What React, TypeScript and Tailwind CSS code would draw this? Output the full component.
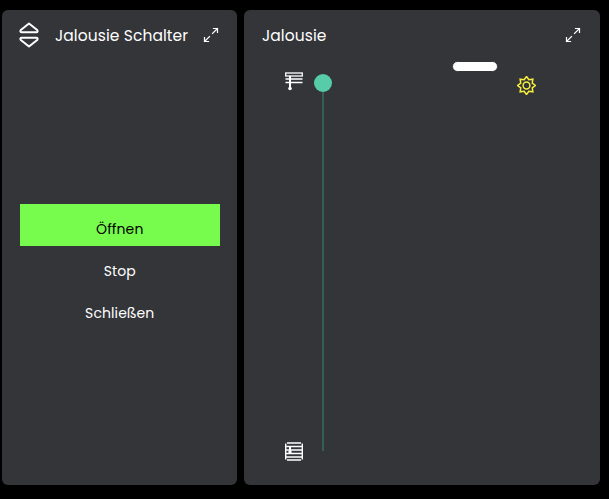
function Expand() {
  return (
    <svg width="16" height="16" viewBox="0 0 16 16" fill="none" stroke="#ffffff" strokeWidth="1.2" strokeLinecap="square">
      <path d="M9.5 6.5 L14.5 1.5 M10.5 1.5 H14.5 V5.5" />
      <path d="M6.5 9.5 L1.5 14.5 M1.5 10.5 V14.5 H5.5" />
    </svg>
  );
}

function UpDown() {
  return (
    <svg width="20" height="26" viewBox="0 0 20 26" fill="none" stroke="#ffffff" strokeWidth="2" strokeLinejoin="round">
      <path d="M10 1.5 L18.2 8 Q19.4 10.3 17.2 10.3 H2.8 Q0.6 10.3 1.8 8 Z" />
      <path d="M10 24.5 L18.2 18 Q19.4 15.7 17.2 15.7 H2.8 Q0.6 15.7 1.8 18 Z" />
    </svg>
  );
}

function BlindOpen() {
  return (
    <svg width="18" height="19" viewBox="0 0 18 19" fill="none" stroke="#ffffff">
      <rect x="0.7" y="1" width="16.6" height="3" strokeWidth="1.3" />
      <path d="M0.5 7 H17.5 M0.5 10.5 H17.5" strokeWidth="1.4" />
      <path d="M5 4 V15" strokeWidth="2" />
      <circle cx="5" cy="16.5" r="1.8" fill="#ffffff" stroke="none" />
    </svg>
  );
}

function BlindClosed() {
  return (
    <svg width="18" height="19" viewBox="0 0 18 19" fill="none" stroke="#ffffff" strokeWidth="1.3">
      <path d="M2 1 H16 M0.7 1.5 V17.5 M17.3 1.5 V17.5 M2 18 H16" strokeWidth="1.4" />
      <path d="M0.7 4.5 H17.3 M0.7 8 H17.3 M0.7 11.5 H17.3 M0.7 15 H17.3" />
      <path d="M5 4.5 V9" strokeWidth="2" />
      <circle cx="5" cy="10" r="1.7" fill="#ffffff" stroke="none" />
    </svg>
  );
}

function Sun() {
  const pts: string[] = [];
  for (let i = 0; i < 16; i++) {
    const r = i % 2 === 0 ? 9 : 6.2;
    const a = (i * Math.PI) / 8 - Math.PI / 2;
    pts.push(`${(9.5 + r * Math.cos(a)).toFixed(2)},${(9.5 + r * Math.sin(a)).toFixed(2)}`);
  }
  return (
    <svg width="19" height="19" viewBox="0 0 19 19" fill="none" stroke="#f8ee3c" strokeWidth="1.5">
      <polygon points={pts.join(" ")} strokeLinejoin="miter" />
      <circle cx="9.5" cy="9.5" r="3.4" />
    </svg>
  );
}

export default function App() {
  return (
    <div className="w-[609px] h-[499px] bg-black flex gap-[7px] pl-[2px] pt-[10px] pb-[14px] pr-[9px] font-['Poppins','Inter',sans-serif] text-white overflow-hidden">
      <div className="w-[235px] bg-[#333539] rounded-[6px] flex flex-col">
        <div className="h-[50px] flex items-center pl-[17px] pr-[18px]">
          <UpDown />
          <span className="ml-[16px] flex-1 pt-[2px] text-[15.5px] tracking-[0.08px] leading-none">Jalousie Schalter</span>
          <Expand />
        </div>
        <div className="mt-[144px] ml-[18px] mr-[17.5px] flex flex-col text-[14px] tracking-[0.1px]">
          <div className="h-[42px] bg-[#77fb4d] text-black flex items-center justify-center pt-[8px]">Öffnen</div>
          <div className="h-[42px] flex items-center justify-center pt-[8px]">Stop</div>
          <div className="h-[42px] flex items-center justify-center pt-[8px]">Schließen</div>
        </div>
      </div>
      <div className="flex-1 bg-[#333539] rounded-[6px] flex flex-col">
        <div className="h-[50px] flex items-center pl-[18px] pr-[19px] justify-between">
          <span className="pt-[2px] text-[15.5px] tracking-[0.08px] leading-none">Jalousie</span>
          <Expand />
        </div>
        <div className="relative flex-1">
          <div className="absolute left-[41px] top-[12px]"><BlindOpen /></div>
          <div className="absolute left-[41px] top-[382px]"><BlindClosed /></div>
          <div className="absolute left-[78px] top-[31px] w-[2px] h-[360px] bg-[#355f54]" />
          <div className="absolute left-[70px] top-[14px] w-[18px] h-[18px] rounded-full bg-[#56cda6]" />
          <div className="absolute left-[208px] top-[1px] w-[46px] h-[11px] rounded-full bg-white border border-[#333539]" />
          <div className="absolute left-[272.5px] top-[15.5px]"><Sun /></div>
        </div>
      </div>
    </div>
  );
}
